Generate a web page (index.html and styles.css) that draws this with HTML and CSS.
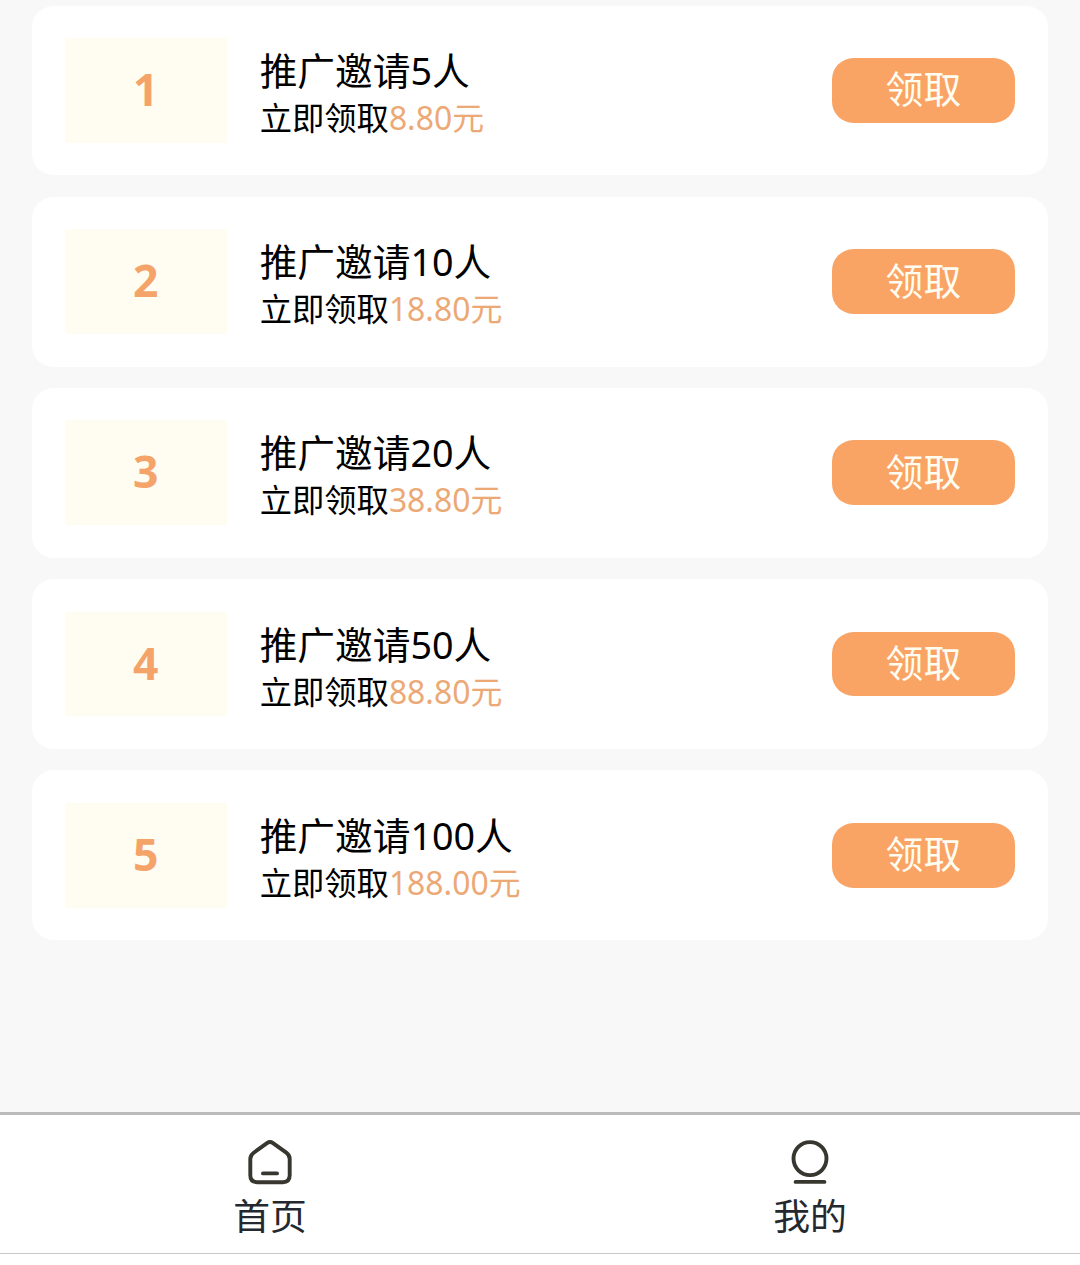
FILE: index.html
```html
<!DOCTYPE html>
<html lang="zh-CN">
<head>
<meta charset="UTF-8">
<title>推广邀请</title>
<link rel="stylesheet" href="styles.css">
</head>
<body>
<main class="list">
  <section class="card">
    <div class="rank">1</div>
    <div class="info">
      <div class="title">推广邀请5人</div>
      <div class="reward">立即领取<span class="amount">8.80元</span></div>
    </div>
    <button class="claim">领取</button>
  </section>
  <section class="card">
    <div class="rank">2</div>
    <div class="info">
      <div class="title">推广邀请10人</div>
      <div class="reward">立即领取<span class="amount">18.80元</span></div>
    </div>
    <button class="claim">领取</button>
  </section>
  <section class="card">
    <div class="rank">3</div>
    <div class="info">
      <div class="title">推广邀请20人</div>
      <div class="reward">立即领取<span class="amount">38.80元</span></div>
    </div>
    <button class="claim">领取</button>
  </section>
  <section class="card">
    <div class="rank">4</div>
    <div class="info">
      <div class="title">推广邀请50人</div>
      <div class="reward">立即领取<span class="amount">88.80元</span></div>
    </div>
    <button class="claim">领取</button>
  </section>
  <section class="card">
    <div class="rank">5</div>
    <div class="info">
      <div class="title">推广邀请100人</div>
      <div class="reward">立即领取<span class="amount">188.00元</span></div>
    </div>
    <button class="claim">领取</button>
  </section>
</main>
<nav class="tabbar">
  <a class="tab">
    <svg class="tab-icon" viewBox="0 0 54 54">
      <path d="M24 8.1Q27 6.1 30 8.1L43.3 17.7Q46.7 20.2 46.7 24V40.3Q46.7 47.2 39.8 47.2H14.2Q7.3 47.2 7.3 40.3V24Q7.3 20.2 10.7 17.7Z"/>
      <path d="M20 38.4H34"/>
    </svg>
    <span class="tab-label">首页</span>
  </a>
  <a class="tab">
    <svg class="tab-icon" viewBox="0 0 54 54">
      <circle cx="27" cy="23.6" r="16.5"/>
      <path d="M12.6 46.9H41.4"/>
    </svg>
    <span class="tab-label">我的</span>
  </a>
</nav>
</body>
</html>
```
FILE: styles.css
```css
* {
  box-sizing: border-box;
}

body {
  display: flex;
  flex-direction: column;
  height: 1265px;
  margin: 0;
  overflow: hidden;
  background: #fff;
  color: #000;
  font-family: "Noto Sans", "Noto Sans CJK SC", sans-serif;
}

.list {
  display: flex;
  flex: 1;
  flex-direction: column;
  gap: 21.5px;
  padding: 5.67px 32.4px 0;
  background: #f8f8f8;
}

.card {
  display: flex;
  align-items: center;
  height: 169.7px;
  padding: 32.4px;
  border-radius: 21.6px;
  background: #fff;
}

.rank {
  width: 162px;
  height: 104.8px;
  background: #fffcf2;
  color: #f5a469;
  font-size: 44.5px;
  font-weight: 700;
  line-height: 101px;
  text-align: center;
}

.info {
  flex: 1;
  margin-left: 32.9px;
  padding-top: 4px;
}

.title {
  height: 49px;
  font-size: 37.7px;
  line-height: 49px;
}

.reward {
  height: 44px;
  font-size: 32.3px;
  line-height: 44px;
}

.amount {
  color: #eca975;
  font-size: 31.9px;
}

.claim {
  width: 183.6px;
  height: 64.8px;
  padding: 0;
  border: 0;
  border-radius: 21.6px;
  background: #f9a364;
  color: #fffdf2;
  font-family: inherit;
  font-size: 37.8px;
  line-height: 60px;
  padding-bottom: 2px;
}

.tabbar {
  display: flex;
  height: 142px;
  margin-bottom: 11px;
  border-top: 3px solid #bbb;
  border-bottom: 1px solid #c8c8c8;
  background: #fff;
}

.tab {
  display: flex;
  flex: 1;
  flex-direction: column;
  align-items: center;
  padding-top: 20px;
}

.tab-icon {
  width: 54px;
  height: 54px;
  fill: none;
  stroke: #37372f;
  stroke-width: 3.9;
  stroke-linecap: round;
  stroke-linejoin: round;
}

.tab-label {
  padding-top: 2px;
  color: #24292f;
  font-size: 36.8px;
  line-height: 50px;
}
```
